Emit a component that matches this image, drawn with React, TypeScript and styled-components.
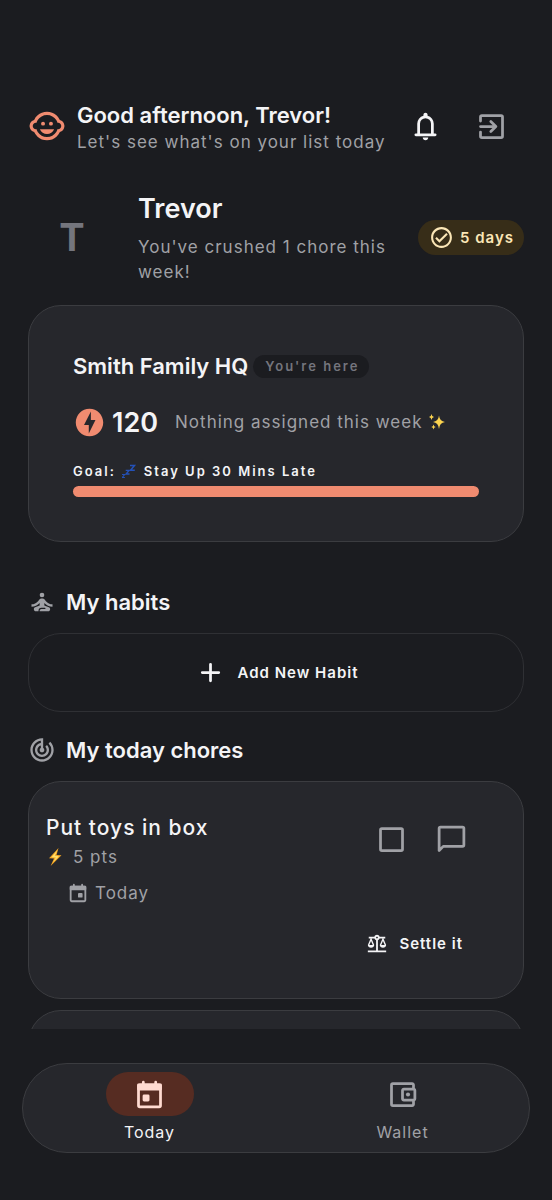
import React from "react";
import styled, { createGlobalStyle } from "styled-components";
import {
  MdBalance,
  MdChildCare,
  MdOfflineBolt,
  MdOutlineAccountBalanceWallet,
  MdOutlineCheckCircle,
  MdSelfImprovement,
  MdTrackChanges,
} from "react-icons/md";

const color = {
  page: "#1b1c20",
  surface: "#26272c",
  outline: "#3b3c40",
  outlineSoft: "#2f3034",
  text: "#f4f4f6",
  muted: "#a0a1a6",
  faint: "#74757d",
  accent: "#f08b70",
  activePill: "#562c22",
  activeIcon: "#ffdbd1",
  streakBg: "#372d18",
  streakText: "#fbe6b6",
};

const GlobalStyle = createGlobalStyle`
  *, *::before, *::after { box-sizing: border-box; }
  html, body { margin: 0; background: ${color.page}; }
  body, button { font-family: Inter, "Liberation Sans", sans-serif; }
  h1, h2, h3, p { margin: 0; }
  button { border: 0; padding: 0; background: none; color: inherit; cursor: pointer; }
  svg { display: block; flex: none; }
`;

const Screen = styled.div`
  display: flex;
  flex-direction: column;
  height: 100vh;
  background: ${color.page};
  color: ${color.text};
`;

const Scroller = styled.main`
  flex: 1;
  min-height: 0;
  overflow-y: auto;
  scrollbar-width: none;
  padding: 93px 28px 0;
`;

const Header = styled.header`
  display: flex;
  align-items: center;
  gap: 11px;
  color: ${color.accent};
`;

const HeaderText = styled.div`
  display: flex;
  flex-direction: column;
  flex: 1;
  gap: 1px;
  min-width: 0;
  padding-top: 3px;
  white-space: nowrap;
  color: ${color.text};
`;

const Title = styled.h2`
  font-size: 22px;
  line-height: 28px;
  font-weight: 600;
`;

const Body = styled.p`
  font-size: 17px;
  line-height: 25px;
  letter-spacing: 1px;
  color: ${color.muted};
`;

const HeaderActions = styled.div`
  display: flex;
`;

const IconButton = styled.button<{ $width: number; $height: number; $bright?: boolean }>`
  display: flex;
  align-items: center;
  justify-content: center;
  width: ${(p) => p.$width}px;
  height: ${(p) => p.$height}px;
  color: ${(p) => (p.$bright ? color.text : color.muted)};
`;

const Profile = styled.section`
  display: flex;
  align-items: center;
  gap: 22px;
  margin: 30px 0 20px;
`;

const Avatar = styled.div`
  flex: none;
  width: 88px;
  text-align: center;
  font-size: 38px;
  line-height: 48px;
  font-weight: 700;
  color: ${color.faint};
`;

const ProfileText = styled.div`
  display: flex;
  flex-direction: column;
  flex: 1;
  gap: 6px;
`;

const Name = styled.h1`
  font-size: 27px;
  line-height: 40px;
  font-weight: 600;
`;

const Streak = styled.div`
  display: flex;
  flex: none;
  align-items: center;
  gap: 6px;
  height: 35px;
  padding: 0 10px 0 11px;
  border-radius: 18px;
  background: ${color.streakBg};
  color: ${color.streakText};
  font-size: 15px;
  font-weight: 600;
  letter-spacing: 1px;
`;

const Card = styled.section`
  border: 1px solid ${color.outline};
  border-radius: 33px;
  background: ${color.surface};
`;

const FamilyCard = styled(Card)`
  padding: 44px;
`;

const FamilyHeading = styled.div`
  display: flex;
  align-items: center;
  gap: 5px;
  height: 32px;
`;

const HereBadge = styled.span`
  padding: 0 10px 0 12px;
  border-radius: 12px;
  background: ${color.page};
  color: ${color.faint};
  font-size: 13px;
  line-height: 23px;
  font-weight: 600;
  letter-spacing: 2px;
`;

const PointsRow = styled.div`
  display: flex;
  align-items: center;
  gap: 6px;
  height: 34px;
  margin: 23px 0 22px;
  white-space: nowrap;
  svg:first-child { color: ${color.accent}; }
`;

const Points = styled.strong`
  margin-right: 11px;
  font-size: 27px;
  font-weight: 600;
`;

const GoalLabel = styled.p`
  display: flex;
  align-items: center;
  gap: 6px;
  margin-bottom: 5px;
  font-size: 13px;
  line-height: 20px;
  font-weight: 600;
  letter-spacing: 2px;
`;

const GoalTrack = styled.div`
  height: 11px;
  border-radius: 6px;
  background: ${color.accent};
`;

const SectionHeading = styled.div<{ $top: number }>`
  display: flex;
  align-items: center;
  gap: 10px;
  margin: ${(p) => p.$top}px 0 17px;
  svg { color: ${color.muted}; }
`;

const AddHabit = styled.button`
  display: flex;
  align-items: center;
  justify-content: center;
  gap: 11px;
  width: 100%;
  height: 79px;
  border: 1px solid ${color.outlineSoft};
  border-radius: 33px;
  font-size: 15px;
  font-weight: 600;
  letter-spacing: 1px;
`;

const ChoreCard = styled(Card)`
  display: flex;
  flex-direction: column;
  gap: 10px;
  min-height: 218px;
  margin-bottom: 11px;
  padding: 27px 42px 27px 17px;
`;

const ChoreTop = styled.div`
  display: flex;
  justify-content: space-between;
  align-items: flex-start;
`;

const ChoreInfo = styled.div`
  display: flex;
  flex-direction: column;
  gap: 10px;
  padding-top: 2px;
`;

const ChoreTitle = styled.h3`
  font-size: 21px;
  line-height: 33px;
  font-weight: 500;
  letter-spacing: 1px;
`;

const ChoreMeta = styled(Body)<{ $indent?: boolean }>`
  display: flex;
  align-items: center;
  gap: ${(p) => (p.$indent ? 6 : 9)}px;
  padding-left: ${(p) => (p.$indent ? 21 : 0)}px;
  line-height: 26px;
`;

const ChoreActions = styled.div`
  display: flex;
`;

const SettleButton = styled.button`
  display: flex;
  align-items: center;
  align-self: flex-end;
  gap: 11px;
  height: 55px;
  padding: 0 18px;
  font-size: 15px;
  font-weight: 600;
  letter-spacing: 1px;
`;

const Footer = styled.footer`
  padding: 34px 22px 47px;
`;

const Tabs = styled.nav`
  display: grid;
  grid-template-columns: 1fr 1fr;
  height: 90px;
  border: 1px solid ${color.outline};
  border-radius: 45px;
  background: ${color.surface};
`;

const Tab = styled.button<{ $active?: boolean }>`
  display: flex;
  flex-direction: column;
  align-items: center;
  gap: 5px;
  padding-top: 8px;
  font-size: 16px;
  line-height: 22px;
  letter-spacing: 1px;
  color: ${(p) => (p.$active ? color.text : color.muted)};
`;

const TabPill = styled.span<{ $active?: boolean }>`
  display: flex;
  align-items: center;
  justify-content: center;
  width: 88px;
  height: 44px;
  border-radius: 22px;
  background: ${(p) => (p.$active ? color.activePill : "transparent")};
  color: ${(p) => (p.$active ? color.activeIcon : color.muted)};
`;

const Stroke = ({ size = 33, children }: { size?: number; children: React.ReactNode }) => (
  <svg
    width={size}
    height={size}
    viewBox="0 0 24 24"
    fill="none"
    stroke="currentColor"
    strokeWidth="2"
    strokeLinecap="round"
    strokeLinejoin="round"
    aria-hidden="true"
  >
    {children}
  </svg>
);

const BellIcon = () => (
  <svg width="33" height="33" viewBox="0 -960 960 960" fill="currentColor" aria-hidden="true">
    <path d="M200-200q-17 0-28.500-11.500T160-240q0-17 11.500-28.500T200-280h40v-280q0-83 50-147.500T420-792v-28q0-25 17.500-42.500T480-880q25 0 42.500 17.500T540-820v28q80 20 130 84.500T720-560v280h40q17 0 28.500 11.500T800-240q0 17-11.500 28.500T760-200H200Zm280 120q-33 0-56.500-23.500T400-160h160q0 33-23.500 56.500T480-80ZM320-280h320v-280q0-66-47-113t-113-47q-66 0-113 47t-47 113v280Z" />
  </svg>
);

const ExitIcon = () => (
  <Stroke>
    <path d="M4 8V5a1 1 0 0 1 1-1h14a1 1 0 0 1 1 1v14a1 1 0 0 1-1 1H5a1 1 0 0 1-1-1v-3" />
    <path d="M4 12h11M11.500 8.300l3.700 3.700-3.700 3.700" />
  </Stroke>
);

const CalendarIcon = ({ size, dayX }: { size: number; dayX: number }) => (
  <Stroke size={size}>
    <rect x="4" y="5" width="16" height="16" rx="1" />
    <path d="M7.500 3v2M16.500 3v2" />
    <path d="M4 5h16v3H4z" fill="currentColor" />
    <rect x={dayX} y="12" width="5" height="5" rx="1" fill="currentColor" stroke="none" />
  </Stroke>
);

const ZzzEmoji = () => (
  <svg width="16" height="15" viewBox="1 0 16 15" fill="none" stroke="#2451b8" aria-label="zzz" role="img">
    <path d="M9 1.500h4.500L9.500 6.300h4.300" strokeWidth="1.500" />
    <path d="M4.700 6.300h3.500L5 10h3.500" strokeWidth="1.300" />
    <path d="M1 10.500h2.600L1.300 13.500h2.600" strokeWidth="1.100" />
  </svg>
);

const SparklesEmoji = () => (
  <svg width="18" height="18" viewBox="0 0 18 18" fill="#fbd34f" aria-label="sparkles" role="img">
    <path d="M11 2.500q.6 5.800 6 6.500-5.400.7-6 7-.6-6.300-6-7 5.400-.7 6-6.500Z" />
    <path d="M3.500 1q.3 2.700 2.500 3-2.200.3-2.500 3Q3.200 4.300 1 4q2.200-.3 2.500-3Z" />
    <path d="M5.500 11.500q.3 2.200 2.200 2.500-1.900.3-2.200 2.600-.3-2.300-2.200-2.600 1.900-.3 2.200-2.500Z" />
  </svg>
);

const ZapEmoji = () => (
  <svg width="18" height="20" viewBox="0 0 18 20" aria-label="zap" role="img">
    <path d="M12.500 1 3 11.300l5 .3L4.600 19 15.500 8.300l-5-.4Z" fill="#f5a623" />
    <path d="M11.500 3 5.500 10.200l4.300.4L7 15.500l6-6.200-4.300-.5Z" fill="#ffe16b" />
  </svg>
);

export default function App() {
  return (
    <>
      <GlobalStyle />
      <Screen>
        <Scroller>
          <Header>
            <MdChildCare size={38} />
            <HeaderText>
              <Title>Good afternoon, Trevor!</Title>
              <Body>Let's see what's on your list today</Body>
            </HeaderText>
            <HeaderActions>
              <IconButton $width={66} $height={66} $bright aria-label="Notifications">
                <BellIcon />
              </IconButton>
              <IconButton $width={66} $height={66} aria-label="Leave">
                <ExitIcon />
              </IconButton>
            </HeaderActions>
          </Header>

          <Profile>
            <Avatar>T</Avatar>
            <ProfileText>
              <Name>Trevor</Name>
              <Body>You've crushed 1 chore this week!</Body>
            </ProfileText>
            <Streak>
              <MdOutlineCheckCircle size={25} />
              5 days
            </Streak>
          </Profile>

          <FamilyCard>
            <FamilyHeading>
              <Title>Smith Family HQ</Title>
              <HereBadge>You're here</HereBadge>
            </FamilyHeading>
            <PointsRow>
              <MdOfflineBolt size={33} />
              <Points>120</Points>
              <Body>Nothing assigned this week</Body>
              <SparklesEmoji />
            </PointsRow>
            <GoalLabel>
              Goal: <ZzzEmoji /> Stay Up 30 Mins Late
            </GoalLabel>
            <GoalTrack />
          </FamilyCard>

          <SectionHeading $top={46}>
            <MdSelfImprovement size={28} />
            <Title>My habits</Title>
          </SectionHeading>
          <AddHabit>
            <Stroke>
              <path d="M12 6v12M6 12h12" />
            </Stroke>
            Add New Habit
          </AddHabit>

          <SectionHeading $top={24}>
            <MdTrackChanges size={28} />
            <Title>My today chores</Title>
          </SectionHeading>
          <ChoreCard>
            <ChoreTop>
              <ChoreInfo>
                <div>
                  <ChoreTitle>Put toys in box</ChoreTitle>
                  <ChoreMeta>
                    <ZapEmoji /> 5 pts
                  </ChoreMeta>
                </div>
                <ChoreMeta $indent>
                  <CalendarIcon size={22} dayX={12} /> Today
                </ChoreMeta>
              </ChoreInfo>
              <ChoreActions>
                <IconButton $width={60} $height={60} aria-label="Mark done">
                  <Stroke>
                    <rect x="4" y="4" width="16" height="16" rx="1" />
                  </Stroke>
                </IconButton>
                <IconButton $width={60} $height={60} aria-label="Comment">
                  <Stroke>
                    <path d="M3 20V4a1 1 0 0 1 1-1h16a1 1 0 0 1 1 1v12a1 1 0 0 1-1 1H6Z" />
                  </Stroke>
                </IconButton>
              </ChoreActions>
            </ChoreTop>
            <SettleButton>
              <MdBalance size={22} />
              Settle it
            </SettleButton>
          </ChoreCard>
          <ChoreCard />
        </Scroller>

        <Footer>
          <Tabs>
            <Tab $active>
              <TabPill $active>
                <CalendarIcon size={33} dayX={7} />
              </TabPill>
              Today
            </Tab>
            <Tab>
              <TabPill>
                <MdOutlineAccountBalanceWallet size={33} />
              </TabPill>
              Wallet
            </Tab>
          </Tabs>
        </Footer>
      </Screen>
    </>
  );
}
